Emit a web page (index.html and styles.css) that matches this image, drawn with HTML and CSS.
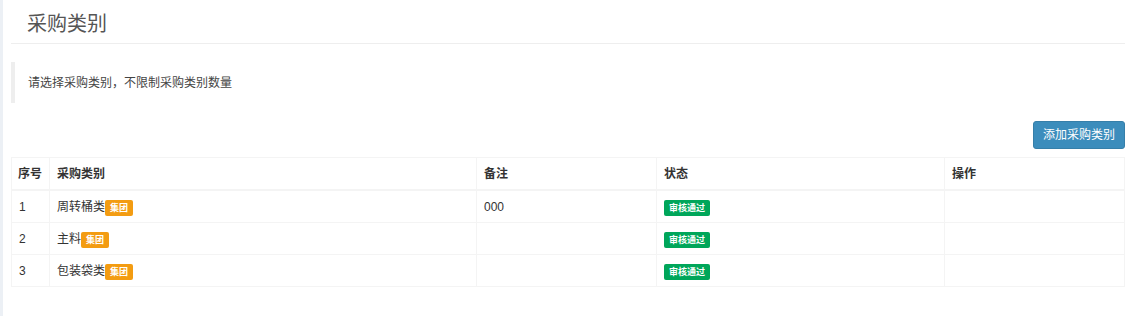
FILE: index.html
```html
<!DOCTYPE html>
<html lang="zh-CN">
<head>
  <meta charset="UTF-8" />
  <meta name="viewport" content="width=device-width, initial-scale=1.0" />
  <title>采购类别</title>
  <link rel="stylesheet" href="styles.css">
</head>
<body>
  <div class="side-strip"></div>

  <div class="content">
    <!-- Page Header -->
    <div class="page-header">
      <h1>采购类别</h1>
    </div>

    <!-- Tip -->
    <div class="callout">请选择采购类别，不限制采购类别数量</div>

    <div class="toolbar">
      <button class="btn-primary">添加采购类别</button>
    </div>

    <!-- Category Table -->
    <table class="data-table">
      <thead>
        <tr>
          <th class="col-no">序号</th>
          <th class="col-name">采购类别</th>
          <th class="col-note">备注</th>
          <th class="col-status">状态</th>
          <th>操作</th>
        </tr>
      </thead>
      <tbody>
        <tr>
          <td>1</td>
          <td>周转桶类<span class="label label-warning">集团</span></td>
          <td>000</td>
          <td><span class="label label-success">审核通过</span></td>
          <td></td>
        </tr>
        <tr>
          <td>2</td>
          <td>主料<span class="label label-warning">集团</span></td>
          <td></td>
          <td><span class="label label-success">审核通过</span></td>
          <td></td>
        </tr>
        <tr>
          <td>3</td>
          <td>包装袋类<span class="label label-warning">集团</span></td>
          <td></td>
          <td><span class="label label-success">审核通过</span></td>
          <td></td>
        </tr>
      </tbody>
    </table>
  </div>
</body>
</html>
```

FILE: styles.css
```css
* {
  box-sizing: border-box;
  margin: 0;
  padding: 0;
  font-family: "Liberation Sans", "Noto Sans CJK SC", sans-serif;
}

body {
  display: flex;
  min-height: 100vh;
  background-color: #fff;
  color: #333;
  font-size: 12px;
}

.side-strip {
  width: 3px;
  background-color: #ecf0f5;
}

.content {
  flex: 1;
  padding: 0 7px 0 8px;
}

.page-header {
  padding: 13px 0 8px 16px;
  border-bottom: 1px solid #eee;
}

.page-header h1 {
  font-size: 20px;
  line-height: 22px;
  font-weight: normal;
  color: #555;
}

.callout {
  margin-top: 18px;
  padding: 13px 15px 11px 13px;
  border-left: 4px solid #eee;
  font-size: 12px;
  line-height: 17px;
  color: #444;
}

.toolbar {
  display: flex;
  justify-content: flex-end;
  margin-top: 18px;
}

.btn-primary {
  padding: 5px 9px;
  font-size: 12px;
  line-height: 16px;
  color: #fff;
  background-color: #3c8dbc;
  border: 1px solid #367fa9;
  border-radius: 3px;
  cursor: pointer;
}

.data-table {
  width: 100%;
  margin-top: 8px;
  border-collapse: collapse;
  table-layout: fixed;
}

.data-table th,
.data-table td {
  padding: 8px 7px 6px;
  border: 1px solid #f4f4f4;
  text-align: left;
  line-height: 17px;
  font-size: 12px;
  white-space: nowrap;
}

.data-table th {
  font-weight: bold;
  border-bottom: 2px solid #f4f4f4;
}

.data-table th.col-no {
  padding-left: 6px;
  padding-right: 0;
}

.col-no { width: 38px; }
.col-name { width: 427px; }
.col-note { width: 180px; }
.col-status { width: 288px; }

.label {
  display: inline-block;
  padding: 3px 5px 3px;
  font-size: 9px;
  font-weight: bold;
  line-height: 10px;
  color: #fff;
  border-radius: 2px;
  vertical-align: middle;
}

.label-warning {
  background-color: #f39c12;
}

.label-success {
  background-color: #00a65a;
}
```
